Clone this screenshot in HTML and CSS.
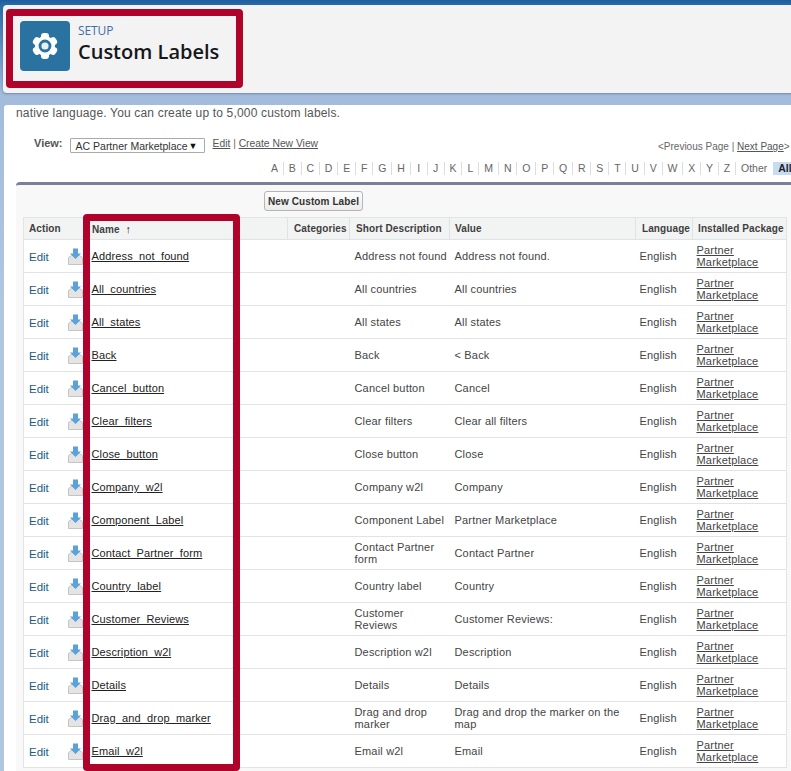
FILE: index.html
```html
<!DOCTYPE html>
<html lang="en">
<head>
<meta charset="utf-8">
<title>Custom Labels</title>
<link rel="stylesheet" href="styles.css">
</head>
<body>
<svg class="defs" width="0" height="0" aria-hidden="true">
  <symbol id="dl" viewBox="0 0 15 17">
    <path d="M0.5 9.5 L3.5 7.5 H11.5 L14.5 9.5 V16.5 H0.5 Z" fill="#e4e4e4" stroke="#c4c4c4"/>
    <path d="M5 0.5 H10 V5.5 H13 L7.5 11 L2 5.5 H5 Z" fill="#5ba2d6"/>
  </symbol>
</svg>
<div class="page">
  <header class="head">
    <div class="tile">
      <svg width="28" height="28" viewBox="0 0 28 28">
        <g fill="#fff">
          <rect x="10" y="1" width="8" height="26" rx="3"/>
          <rect x="10" y="1" width="8" height="26" rx="3" transform="rotate(60 14 14)"/>
          <rect x="10" y="1" width="8" height="26" rx="3" transform="rotate(120 14 14)"/>
          <circle cx="14" cy="14" r="10"/>
        </g>
        <circle cx="14" cy="14" r="5" fill="#e8eef3" stroke="#2a729f" stroke-width="2.8"/>
      </svg>
    </div>
    <div class="titles">
      <div class="crumb">SETUP</div>
      <h1>Custom Labels</h1>
    </div>
  </header>
  <main class="panel">
    <p class="intro">native language. You can create up to 5,000 custom labels.</p>
    <div class="viewrow">
      <label class="viewlabel">View:</label>
      <div class="select"><span>AC Partner Marketplace</span><span class="caret">▼</span></div>
      <div class="viewlinks"><a href="#">Edit</a> | <a href="#">Create New View</a></div>
      <div class="pager">&lt;Previous Page | <a href="#">Next Page</a>&gt;</div>
    </div>
    <nav class="alpha">
      <span>A</span><span>B</span><span>C</span><span>D</span><span>E</span><span>F</span><span>G</span><span>H</span><span>I</span><span>J</span><span>K</span><span>L</span><span>M</span><span>N</span><span>O</span><span>P</span><span>Q</span><span>R</span><span>S</span><span>T</span><span>U</span><span>V</span><span>W</span><span>X</span><span>Y</span><span>Z</span><span class="other">Other</span><b class="all">All</b>
    </nav>
    <section class="block">
      <div class="btnrow"><button class="btn" type="button">New Custom Label</button></div>
      <table class="list">
        <colgroup>
          <col class="c1"><col class="c2"><col class="c3"><col class="c4"><col class="c5"><col class="c6"><col class="c7">
        </colgroup>
        <thead>
          <tr><th>Action</th><th>Name <span class="arrow">↑</span></th><th>Categories</th><th>Short Description</th><th>Value</th><th>Language</th><th>Installed Package</th></tr>
        </thead>
        <tbody>
          <tr><td class="act"><a href="#">Edit</a><svg class="dl"><use href="#dl"/></svg></td><td><a href="#">Address_not_found</a></td><td></td><td>Address not found</td><td>Address not found.</td><td>English</td><td><a href="#">Partner Marketplace</a></td></tr>
          <tr><td class="act"><a href="#">Edit</a><svg class="dl"><use href="#dl"/></svg></td><td><a href="#">All_countries</a></td><td></td><td>All countries</td><td>All countries</td><td>English</td><td><a href="#">Partner Marketplace</a></td></tr>
          <tr><td class="act"><a href="#">Edit</a><svg class="dl"><use href="#dl"/></svg></td><td><a href="#">All_states</a></td><td></td><td>All states</td><td>All states</td><td>English</td><td><a href="#">Partner Marketplace</a></td></tr>
          <tr><td class="act"><a href="#">Edit</a><svg class="dl"><use href="#dl"/></svg></td><td><a href="#">Back</a></td><td></td><td>Back</td><td>&lt; Back</td><td>English</td><td><a href="#">Partner Marketplace</a></td></tr>
          <tr><td class="act"><a href="#">Edit</a><svg class="dl"><use href="#dl"/></svg></td><td><a href="#">Cancel_button</a></td><td></td><td>Cancel button</td><td>Cancel</td><td>English</td><td><a href="#">Partner Marketplace</a></td></tr>
          <tr><td class="act"><a href="#">Edit</a><svg class="dl"><use href="#dl"/></svg></td><td><a href="#">Clear_filters</a></td><td></td><td>Clear filters</td><td>Clear all filters</td><td>English</td><td><a href="#">Partner Marketplace</a></td></tr>
          <tr><td class="act"><a href="#">Edit</a><svg class="dl"><use href="#dl"/></svg></td><td><a href="#">Close_button</a></td><td></td><td>Close button</td><td>Close</td><td>English</td><td><a href="#">Partner Marketplace</a></td></tr>
          <tr><td class="act"><a href="#">Edit</a><svg class="dl"><use href="#dl"/></svg></td><td><a href="#">Company_w2l</a></td><td></td><td>Company w2l</td><td>Company</td><td>English</td><td><a href="#">Partner Marketplace</a></td></tr>
          <tr><td class="act"><a href="#">Edit</a><svg class="dl"><use href="#dl"/></svg></td><td><a href="#">Component_Label</a></td><td></td><td>Component Label</td><td>Partner Marketplace</td><td>English</td><td><a href="#">Partner Marketplace</a></td></tr>
          <tr><td class="act"><a href="#">Edit</a><svg class="dl"><use href="#dl"/></svg></td><td><a href="#">Contact_Partner_form</a></td><td></td><td>Contact Partner form</td><td>Contact Partner</td><td>English</td><td><a href="#">Partner Marketplace</a></td></tr>
          <tr><td class="act"><a href="#">Edit</a><svg class="dl"><use href="#dl"/></svg></td><td><a href="#">Country_label</a></td><td></td><td>Country label</td><td>Country</td><td>English</td><td><a href="#">Partner Marketplace</a></td></tr>
          <tr><td class="act"><a href="#">Edit</a><svg class="dl"><use href="#dl"/></svg></td><td><a href="#">Customer_Reviews</a></td><td></td><td>Customer Reviews</td><td>Customer Reviews:</td><td>English</td><td><a href="#">Partner Marketplace</a></td></tr>
          <tr><td class="act"><a href="#">Edit</a><svg class="dl"><use href="#dl"/></svg></td><td><a href="#">Description_w2l</a></td><td></td><td>Description w2l</td><td>Description</td><td>English</td><td><a href="#">Partner Marketplace</a></td></tr>
          <tr><td class="act"><a href="#">Edit</a><svg class="dl"><use href="#dl"/></svg></td><td><a href="#">Details</a></td><td></td><td>Details</td><td>Details</td><td>English</td><td><a href="#">Partner Marketplace</a></td></tr>
          <tr><td class="act"><a href="#">Edit</a><svg class="dl"><use href="#dl"/></svg></td><td><a href="#">Drag_and_drop_marker</a></td><td></td><td>Drag and drop marker</td><td>Drag and drop the marker on the map</td><td>English</td><td><a href="#">Partner Marketplace</a></td></tr>
          <tr><td class="act"><a href="#">Edit</a><svg class="dl"><use href="#dl"/></svg></td><td><a href="#">Email_w2l</a></td><td></td><td>Email w2l</td><td>Email</td><td>English</td><td><a href="#">Partner Marketplace</a></td></tr>
        </tbody>
      </table>
    </section>
  </main>
  <div class="mark mark-head"></div>
  <div class="mark mark-name"></div>
</div>
</body>
</html>
```
FILE: styles.css
```css
* { box-sizing: border-box; }
html, body { margin: 0; padding: 0; height: 100%; overflow: hidden; }
body {
  font-family: "Liberation Sans", Arial, sans-serif;
  font-size: 11px;
  color: #333;
}
.defs { position: absolute; }
.page {
  position: relative;
  height: 771px;
  overflow: hidden;
  display: flex;
  flex-direction: column;
  padding: 5px 0 0 3px;
  background: linear-gradient(#1d5d9e 0, #2a6aa8 5px, #a3bcdc 96px, #afc6e1 300px);
}
.head {
  flex: none;
  height: 88px;
  margin-right: -6px;
  background: #f3f3f3;
  border-radius: 4px;
  padding: 16px 0 0 17px;
  display: flex;
  gap: 8px;
  box-shadow: 0 1px 2px rgba(60, 80, 110, .45);
}
.tile {
  width: 50px;
  height: 50px;
  background: #2a729f;
  border-radius: 4px;
  display: flex;
  align-items: center;
  justify-content: center;
}
.titles { padding-top: 2px; }
.crumb { font-family: "Open Sans", sans-serif; font-size: 12px; line-height: 16px; color: #3f6ea8; letter-spacing: -.1px; }
h1 {
  margin: 0;
  font-family: "Open Sans", sans-serif;
  font-size: 20px;
  line-height: 26px;
  font-weight: 600;
  color: #16171a;
  white-space: nowrap;
}
.panel {
  flex: 1;
  margin: 12px -6px 0 1px;
  background: #fff;
  border-radius: 3px 3px 0 0;
  padding: 0 0 0 12px;
  overflow: hidden;
}
.intro { margin: 0; font-size: 12px; line-height: 16px; color: #555; letter-spacing: .17px; }
.viewrow {
  display: flex;
  align-items: flex-start;
  height: 26px;
  margin-top: 15px;
  padding-left: 18px;
  position: relative;
}
.viewlabel { font-weight: bold; color: #555; margin-right: 7px; line-height: 14px; }
.select {
  width: 135px;
  height: 15px;
  margin-top: 2px;
  border: 1px solid #aaa;
  border-radius: 1px;
  display: flex;
  justify-content: space-between;
  padding: 0 6px 0 5px;
  font-size: 10.5px;
  line-height: 14px;
  color: #333;
}
.caret { font-size: 9px; color: #111; }
.viewlinks { margin-left: 8px; font-size: 10.3px; line-height: 14px; color: #666; padding-top: 1px; }
.viewlinks a, .pager a { color: #555; }
.pager {
  position: absolute;
  left: 642px;
  top: 4px;
  font-size: 10px;
  line-height: 14px;
  color: #666;
  white-space: nowrap;
}
.alpha {
  display: flex;
  justify-content: flex-start;
  padding-left: 250px;
  height: 13px;
  font-size: 10.5px;
  line-height: 13px;
  color: #666;
}
.alpha span { padding: 0 4.9px; border-right: 1px solid #ddd; white-space: nowrap; min-width: 17px; text-align: center; }
.alpha .other { border-right: 0; padding-right: 6px; }
.alpha .all { background: #c5dcf3; color: #222; padding: 0 5px; margin-left: 0; flex: none; }
.block {
  width: 790px;
  height: 600px;
  margin-top: 7px;
  border-top: 3px solid #7a8099;
  border-radius: 4px 0 0 0;
  background: #f8f8f8;
  padding: 6px 0 0 7px;
}
.btnrow { height: 26px; padding-left: 241px; }
.btn {
  display: block;
  width: 99px;
  height: 20px;
  padding: 0;
  border: 1px solid #b5b5b5;
  border-radius: 3px;
  background: linear-gradient(#fdfdfd, #ececec);
  font: bold 10px "Liberation Sans", Arial, sans-serif;
  color: #333;
  letter-spacing: .1px;
  white-space: nowrap;
}
.list {
  table-layout: fixed;
  width: 763px;
  border-collapse: collapse;
  background: #fff;
  border: 1px solid #e3e3e3;
}
.c1 { width: 64px; }
.c2 { width: 200px; }
.c3 { width: 62px; }
.c4 { width: 100px; }
.c5 { width: 186px; }
.c6 { width: 57px; }
.c7 { width: 94px; }
th {
  height: 22px;
  padding: 0 0 0 5px;
  background: #f2f3f3;
  border-right: 1px solid #e0e3e5;
  border-bottom: 1px solid #e0e3e5;
  text-align: left;
  font-size: 10px;
  font-weight: bold;
  color: #3e3e3e;
  letter-spacing: .1px;
  white-space: nowrap;
  overflow: hidden;
}
th:nth-child(2) { padding-left: 4px; }
th:nth-child(3), th:nth-child(4), th:nth-child(6) { padding-left: 6px; }
.arrow { margin-left: 3px; font-weight: normal; font-size: 11px; color: #222; }
td {
  height: 33px;
  padding: 0 0 0 5px;
  border-bottom: 1px solid #e3e3e3;
  font-size: 11px;
  line-height: 12px;
  letter-spacing: .18px;
  color: #444;
  vertical-align: middle;
}
td a { color: #222; }
td:nth-child(2) { padding-left: 4px; white-space: nowrap; }
td:nth-child(2) a { letter-spacing: .13px; }
td:nth-child(4) { padding-right: 2px; }
td:nth-child(6) { padding-left: 4px; }
td:nth-child(7) { padding: 0 3px 0 4px; }
td:nth-child(7) a { color: #444; }
.act { white-space: nowrap; }
.act a { color: #1c5c86; text-decoration: none; font-size: 11.5px; letter-spacing: 0; }
.dl { width: 15px; height: 17px; margin-left: 19px; vertical-align: -4px; }
.mark {
  position: absolute;
  border: 7px solid #b0032c;
  border-radius: 4px;
  pointer-events: none;
}
.mark-head { left: 6px; top: 9px; width: 237px; height: 79px; }
.mark-name { left: 83px; top: 214px; width: 157px; height: 557px; }
```
